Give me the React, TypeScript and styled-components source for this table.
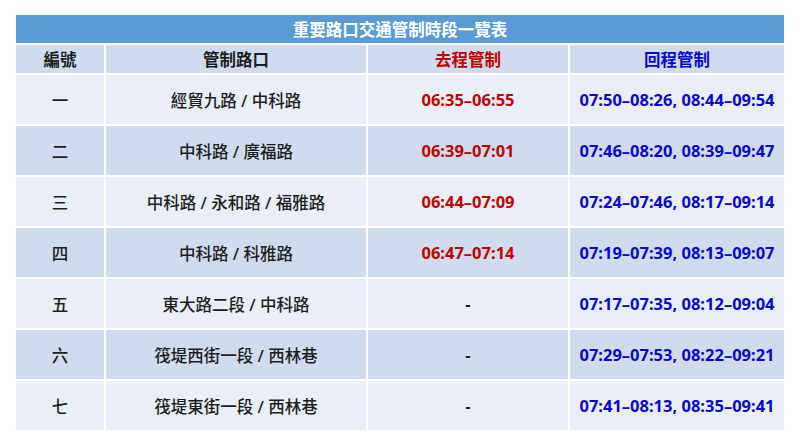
import styled, { createGlobalStyle } from 'styled-components'

const GlobalStyle = createGlobalStyle`
  body {
    margin: 0;
    background: #ffffff;
    font-family: 'Noto Sans', 'Noto Sans CJK TC', sans-serif;
  }
`

interface Row {
  no: string
  road: string
  go: string
  back: string
}

const rows: Row[] = [
  { no: '一', road: '經貿九路 / 中科路', go: '06:35–06:55', back: '07:50–08:26, 08:44–09:54' },
  { no: '二', road: '中科路 / 廣福路', go: '06:39–07:01', back: '07:46–08:20, 08:39–09:47' },
  { no: '三', road: '中科路 / 永和路 / 福雅路', go: '06:44–07:09', back: '07:24–07:46, 08:17–09:14' },
  { no: '四', road: '中科路 / 科雅路', go: '06:47–07:14', back: '07:19–07:39, 08:13–09:07' },
  { no: '五', road: '東大路二段 / 中科路', go: '-', back: '07:17–07:35, 08:12–09:04' },
  { no: '六', road: '筏堤西街一段 / 西林巷', go: '-', back: '07:29–07:53, 08:22–09:21' },
  { no: '七', road: '筏堤東街一段 / 西林巷', go: '-', back: '07:41–08:13, 08:35–09:41' }
]

const Page = styled.div`
  padding: 15px 16px 0 16px;
`

const Table = styled.div`
  width: 768px;
  display: grid;
  grid-template-columns: 88px 260px 200px 214px;
  grid-template-rows: 28px 28px repeat(7, 49px);
  gap: 2px;
  background: #ffffff;
`

const Title = styled.div`
  grid-column: 1 / -1;
  background: #5b9bd5;
  color: #ffffff;
  font-weight: 700;
  font-size: 16.5px;
  display: flex;
  align-items: center;
  justify-content: center;
`

const Cell = styled.div<{ $band: 'head' | 'dark' | 'light'; $tone?: 'red' | 'blue' | 'plain'; $bold?: boolean }>`
  display: flex;
  align-items: center;
  justify-content: center;
  font-size: 16.5px;
  white-space: nowrap;
  background: ${(p) => (p.$band === 'light' ? '#e9eef7' : '#d0dcee')};
  color: ${(p) => (p.$tone === 'red' ? '#c00000' : p.$tone === 'blue' ? '#0808cc' : '#1e1e1e')};
  font-weight: ${(p) => (p.$bold ? 700 : 500)};
`

const App = () => {
  return (
    <Page>
      <GlobalStyle />
      <Table>
        <Title>重要路口交通管制時段一覽表</Title>
        <Cell $band='head' $bold>編號</Cell>
        <Cell $band='head' $bold>管制路口</Cell>
        <Cell $band='head' $tone='red' $bold>去程管制</Cell>
        <Cell $band='head' $tone='blue' $bold>回程管制</Cell>
        {rows.map((r, i) => {
          const band = i % 2 === 0 ? 'light' : 'dark'
          return [
            <Cell key={`${i}-no`} $band={band}>{r.no}</Cell>,
            <Cell key={`${i}-road`} $band={band}>{r.road}</Cell>,
            <Cell key={`${i}-go`} $band={band} $tone={r.go === '-' ? 'plain' : 'red'} $bold>{r.go}</Cell>,
            <Cell key={`${i}-back`} $band={band} $tone='blue' $bold>{r.back}</Cell>
          ]
        })}
      </Table>
    </Page>
  )
}

export default App
